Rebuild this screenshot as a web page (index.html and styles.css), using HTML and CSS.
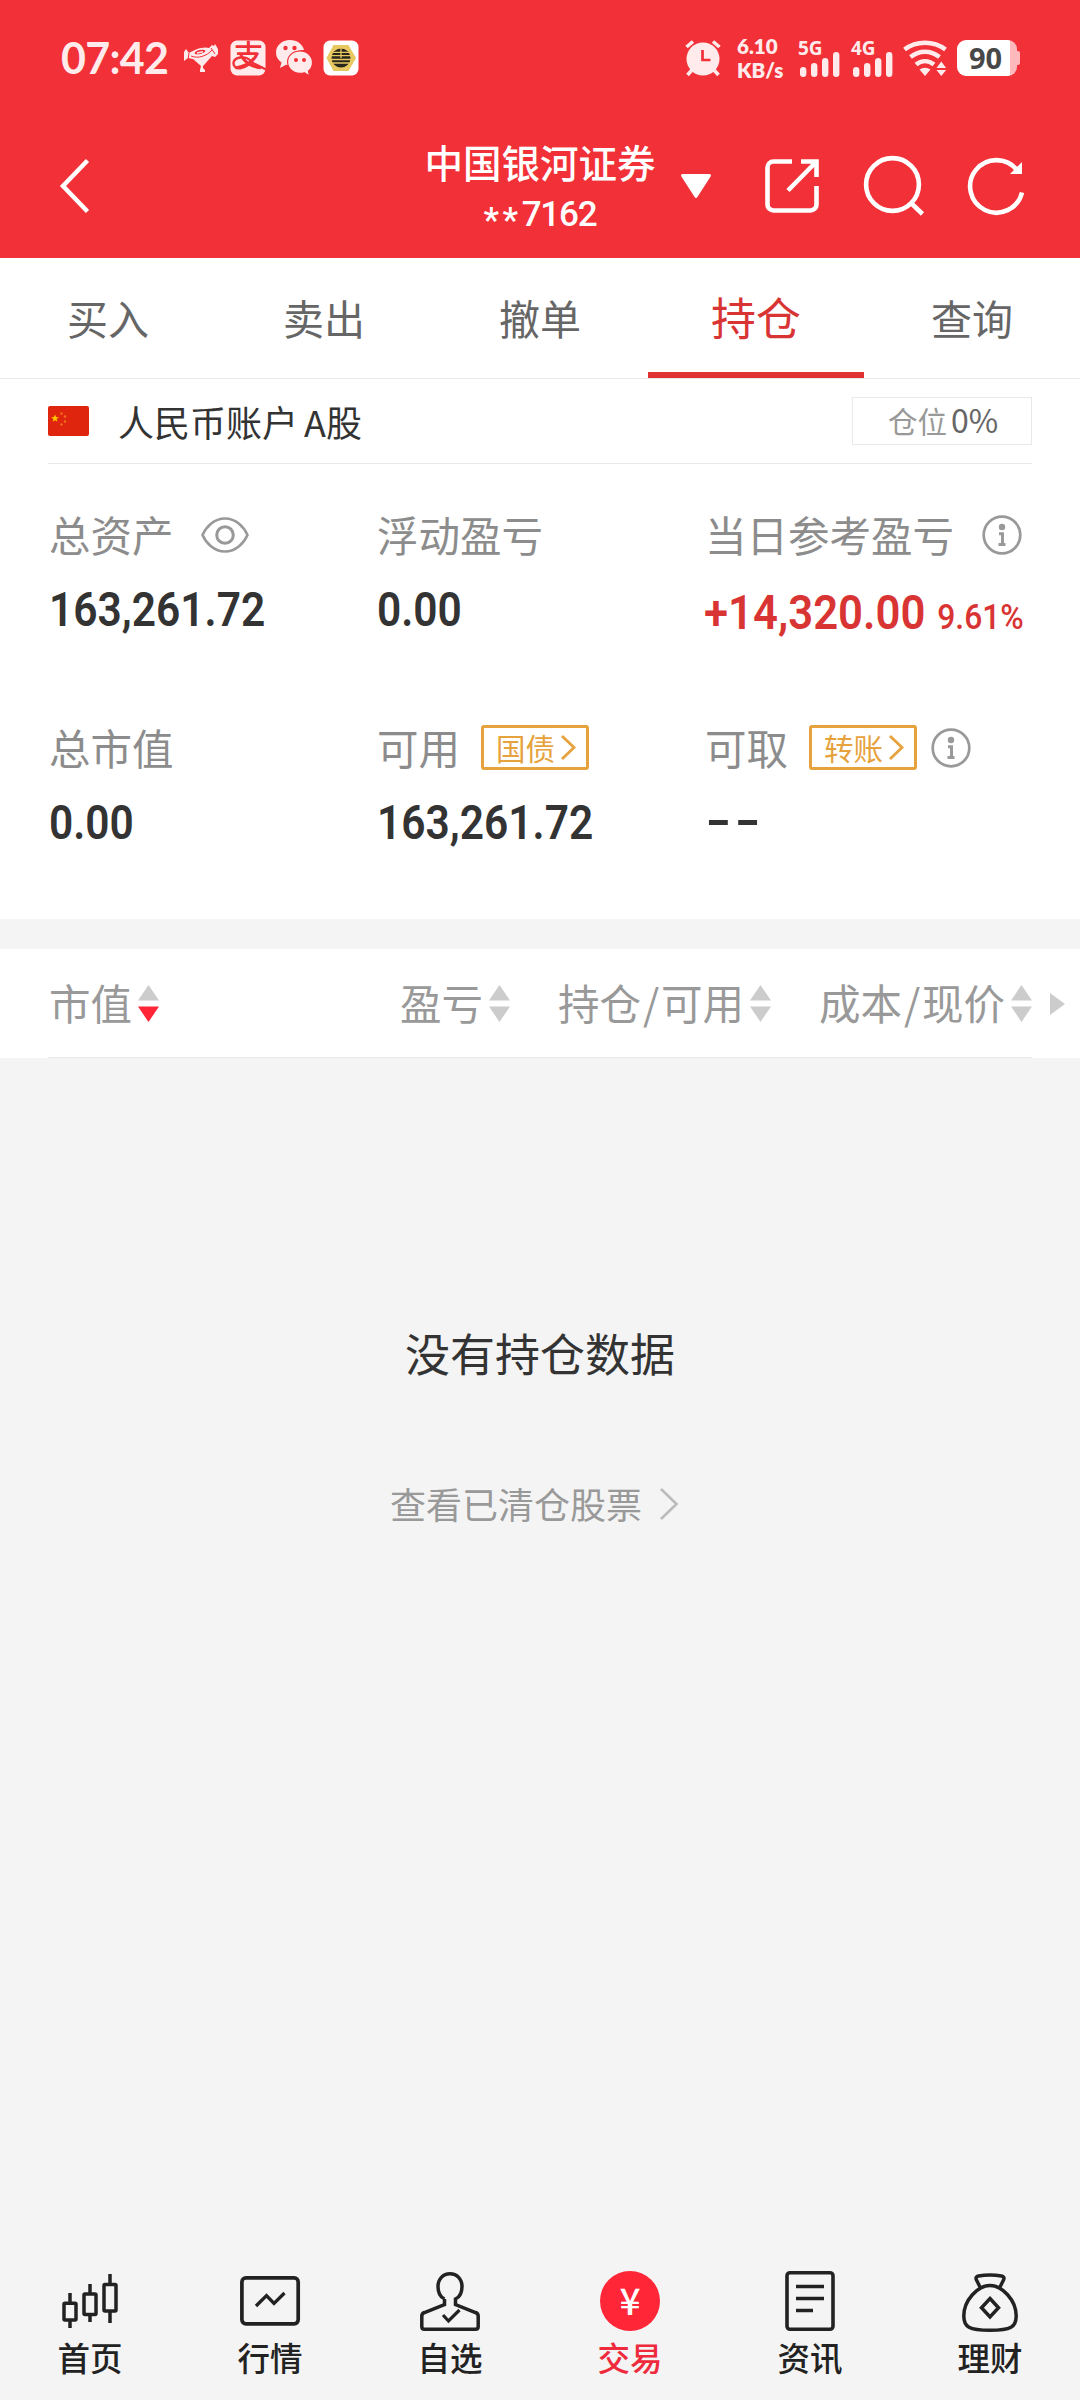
FILE: index.html
```html
<!DOCTYPE html>
<html lang="zh-CN">
<head>
<meta charset="utf-8">
<title>持仓</title>
<link rel="stylesheet" href="styles.css">
</head>
<body>
<div class="app">
  <header class="top">
    <div class="status">
      <span class="clock">07:42</span>
      <div class="notices">
        <svg width="36" height="36" viewBox="0 0 36 36"><path fill="#ffebec" d="M1 12l2-3 3 4c5-3 14-7 20-5l3-3 2 1 1-2 3 5v5l-3 3-3-1-8 9-1 1v2l2 2v2h-5v-2l1-4-8-7-5-1-4 3v-4z"/><path fill="none" stroke="#f23037" stroke-width="1" d="M8 16c7 3 16 0 21-6M28 8l4 6M6 13l-1 7"/><ellipse cx="17" cy="12" rx="5.500" ry="2" fill="#f23037" transform="rotate(-12 17 12)"/><path stroke="#ffebec" stroke-width="1.500" d="M14 13l6-1.200"/></svg>
        <svg width="36" height="36" viewBox="0 0 36 36"><rect x=".5" y=".5" width="35" height="35" rx="6.500" fill="#ffebec"/><text class="pay" x="18.500" y="26" text-anchor="middle">支</text><path d="M21 21C15 15 4 17 3.500 23c-.5 8 14 7 20-5M20 21.500l16 8" fill="none" stroke="#f23037" stroke-width="2.400"/></svg>
        <svg width="36" height="36" viewBox="0 0 36 36"><path fill="#ffebec" d="M14 0C6 0 0 5.500 0 12.500c0 4.500 2.200 7.700 5.500 10L4 28l6-3.200c2 .5 3 .5 5 .4C12 17 18 9.700 28 10 26.500 4 21 0 14 0z"/><path fill="#ffebec" stroke="#f23037" stroke-width="1.200" d="M24 11c-7 0-12.400 4.800-12.400 11S17 33.400 24 33.400c1.500 0 3-.2 4.200-.7L33.500 36l-1-5c2.500-2 4-5 4-8.600C36.500 16 31 11 24 11z"/><g fill="#f23037"><circle cx="9.500" cy="8" r="2.200"/><circle cx="18.500" cy="8" r="2.200"/><circle cx="20" cy="20" r="2"/><circle cx="28" cy="20" r="2"/></g></svg>
        <svg width="36" height="36" viewBox="0 0 36 36"><rect x=".5" y=".5" width="35" height="35" rx="6.500" fill="#fff"/><path fill="#e8c860" d="M10.500 5h15L33 18l-7.500 13h-15L3.500 18z"/><circle cx="18" cy="18" r="9.500" fill="#29261c"/><path stroke="#e8c860" stroke-width="1.300" d="M18 8v10M8 12.300h20M8 15.700h20M8 19.500h20M8 23h20"/></svg>
      </div>
      <div class="signals">
        <svg width="38" height="38" viewBox="0 0 38 38"><circle cx="19" cy="20" r="16.500" fill="#ffebec"/><path d="M2.500 8L9 2.500M35.500 8L29 2.500M8 31l-4.500 5M30 31l4.500 5" stroke="#ffebec" stroke-width="3.600"/><path d="M18.500 11v10h8" fill="none" stroke="#f23037" stroke-width="2.700"/></svg>
        <div class="speed"><span>6.10</span><span>KB/s</span></div>
        <div class="cell"><span>5G</span><svg width="40" height="26" viewBox="0 0 40 26"><path d="M3.200 19.200v3.600M14.200 15.200v7.600M25.200 10.200v12.600M36.200 4.200v18.600" stroke="#ffebec" stroke-width="6.400" stroke-linecap="round"/></svg></div>
        <div class="cell"><span>4G</span><svg width="40" height="26" viewBox="0 0 40 26"><path d="M3.200 19.200v3.600M14.200 15.200v7.600M25.200 10.200v12.600M36.200 4.200v18.600" stroke="#ffebec" stroke-width="6.400" stroke-linecap="round"/></svg></div>
        <svg class="wifi" width="44" height="38" viewBox="0 0 44 38"><g fill="none" stroke="#ffebec" stroke-width="4.500"><path d="M1.500 10.500c12-9 29-9 41 0M7.500 18c9-7 20-7 29 0M13 25.500c5.500-4.500 12.500-4.500 18 0"/></g><path fill="#ffebec" d="M16.500 30.500q5.500-3.500 11 0L22 37zM33.500 29l4.800-6.500 4.800 6.500zM33.500 31h9.600l-4.800 6z"/></svg>
        <div class="battery"><span>90</span></div>
      </div>
    </div>
    <div class="bar">
      <svg class="back" width="32" height="58" viewBox="0 0 32 58"><path d="M28.500 3.500L4 29l24.500 25.500" fill="none" stroke="#fff" stroke-width="4.500"/></svg>
      <div class="account">
        <span class="broker">中国银河证券</span>
        <span class="number"><i>**</i>7162</span>
      </div>
      <svg class="drop" width="30" height="24" viewBox="0 0 30 24"><path fill="#fff" stroke="#fff" stroke-width="3" stroke-linejoin="round" d="M1.500 1.500h27L15 22.500z"/></svg>
      <div class="tools">
        <svg width="54" height="54" viewBox="0 0 54 54"><path d="M27 2.500H8.500a6 6 0 0 0-6 6v37a6 6 0 0 0 6 6h37a6 6 0 0 0 6-6V27M36 2.500h15.500V18M51 3L23 31.500" fill="none" stroke="#fff" stroke-width="4.600"/></svg>
        <svg width="60" height="60" viewBox="0 0 60 60"><circle cx="28.500" cy="28.500" r="26.400" fill="none" stroke="#fff" stroke-width="4.600"/><path d="M47 47l11.500 11" stroke="#fff" stroke-width="4.600"/></svg>
        <svg width="58" height="60" viewBox="0 0 58 60"><path d="M54 36.500A26.300 26.300 0 1 1 49 14" fill="none" stroke="#fff" stroke-width="4.600"/><path fill="#fff" d="M54 6v12H42z"/></svg>
      </div>
    </div>
  </header>

  <nav class="tabs">
    <span class="tab">买入</span><span class="tab">卖出</span><span class="tab">撤单</span><span class="tab active">持仓</span><span class="tab">查询</span>
  </nav>

  <section class="summary">
    <div class="market">
      <svg width="41" height="30" viewBox="0 0 41 30"><rect width="41" height="30" rx="2" fill="#e0250f"/><path fill="#ffc400" d="M7 8.500l1.100 2.600 2.800.2-2.200 1.800.7 2.700L7 14.300l-2.400 1.500.7-2.700-2.200-1.800 2.800-.2z"/><g fill="#f0701c"><circle cx="13.500" cy="7.500" r="1.200"/><circle cx="17" cy="10.500" r="1.200"/><circle cx="17" cy="15.500" r="1.200"/><circle cx="13.500" cy="18.500" r="1.200"/></g></svg>
      <span class="market-name">人民币账户<i></i>A股</span>
      <div class="ratio">仓位<b>0%</b></div>
    </div>
    <div class="figures">
      <div class="figure">
        <div class="label">总资产<svg class="eye" width="48" height="36" viewBox="0 0 48 36"><path d="M1.500 18C5 10 13 1.500 24 1.500S43 10 46.500 18C43 26 35 34.500 24 34.500S5 26 1.500 18z" fill="none" stroke="#999" stroke-width="2.600"/><circle cx="24" cy="18" r="8.300" fill="none" stroke="#999" stroke-width="3"/></svg></div>
        <div class="value"><span>163,261.72</span></div>
      </div>
      <div class="figure">
        <div class="label">浮动盈亏</div>
        <div class="value"><span>0.00</span></div>
      </div>
      <div class="figure">
        <div class="label">当日参考盈亏<svg class="info far" width="40" height="40" viewBox="0 0 40 40"><circle cx="20" cy="20" r="18.300" fill="none" stroke="#999" stroke-width="2.700"/><circle cx="20" cy="12" r="3.200" fill="#999"/><path d="M17 18.800h3.500v10.500M16.500 29.500h7" fill="none" stroke="#999" stroke-width="3"/></svg></div>
        <div class="value gain"><span>+14,320.00<small>9.61%</small></span></div>
      </div>
      <div class="figure">
        <div class="label">总市值</div>
        <div class="value"><span>0.00</span></div>
      </div>
      <div class="figure">
        <div class="label">可用<span class="tag">国债<svg width="17" height="27" viewBox="0 0 17 27"><path d="M2 2l12 11.500L2 25" fill="none" stroke="#e6a23c" stroke-width="2.800"/></svg></span></div>
        <div class="value"><span>163,261.72</span></div>
      </div>
      <div class="figure">
        <div class="label">可取<span class="tag">转账<svg width="17" height="27" viewBox="0 0 17 27"><path d="M2 2l12 11.500L2 25" fill="none" stroke="#e6a23c" stroke-width="2.800"/></svg></span><svg class="info near" width="40" height="40" viewBox="0 0 40 40"><circle cx="20" cy="20" r="18.300" fill="none" stroke="#999" stroke-width="2.700"/><circle cx="20" cy="12" r="3.200" fill="#999"/><path d="M17 18.800h3.500v10.500M16.500 29.500h7" fill="none" stroke="#999" stroke-width="3"/></svg></div>
        <div class="value dashes"><span>--</span></div>
      </div>
    </div>
  </section>

  <section class="columns">
    <div class="col first"><span>市值</span><svg width="21" height="37" viewBox="0 0 21 37"><path fill="#ccc" d="M10.500 0L21 15.500H0z"/><path fill="#fe2637" d="M10.500 37L21 21.500H0z"/></svg></div>
    <div class="col"><span>盈亏</span><svg width="21" height="37" viewBox="0 0 21 37"><path fill="#ccc" d="M10.500 0L21 15.500H0zM10.500 37L21 21.500H0z"/></svg></div>
    <div class="col"><span>持仓<em>/</em>可用</span><svg width="21" height="37" viewBox="0 0 21 37"><path fill="#ccc" d="M10.500 0L21 15.500H0zM10.500 37L21 21.500H0z"/></svg></div>
    <div class="col"><span>成本<em>/</em>现价</span><svg width="21" height="37" viewBox="0 0 21 37"><path fill="#ccc" d="M10.500 0L21 15.500H0zM10.500 37L21 21.500H0z"/></svg></div>
    <svg class="more" width="15" height="22" viewBox="0 0 15 22"><path fill="#ccc" d="M0 0l15 11L0 22z"/></svg>
  </section>

  <main class="empty">
    <p class="none">没有持仓数据</p>
    <p class="cleared">查看已清仓股票<svg width="20" height="34" viewBox="0 0 20 34"><path d="M2 2l15.500 15L2 32" fill="none" stroke="#bbb" stroke-width="2.600"/></svg></p>
  </main>

  <footer class="dock">
    <div class="item"><svg width="60" height="64" viewBox="0 0 60 64"><g fill="none" stroke="#222" stroke-width="3.500"><rect x="4" y="33.300" width="12" height="16.700" rx="1"/><path d="M10 23v9M10 50v8"/><rect x="24" y="24" width="12" height="20.500" rx="1"/><path d="M30 14v9M30 45v7"/><rect x="44" y="14.500" width="12" height="26.500" rx="1"/><path d="M50 4v9M50 42v11"/></g></svg><span>首页</span></div>
    <div class="item"><svg width="60" height="64" viewBox="0 0 60 64"><g fill="none" stroke="#222" stroke-width="3.700"><rect x="1.900" y="7.900" width="56.300" height="45.900" rx="4"/><path d="M16 36l10.500-10.500 7.500 8L44.500 23" stroke-width="3.300"/></g></svg><span>行情</span></div>
    <div class="item"><svg width="60" height="64" viewBox="0 0 60 64"><g fill="none" stroke="#222" stroke-width="3.500"><path d="M24.500 29v5.500L4.500 42.500Q1.800 43.500 1.800 46v10.500Q1.800 59.300 4.500 59.300h51q2.700 0 2.700-2.800V46q0-2.500-2.700-3.500L35.500 34.500V29C40 27 42 23 42 16.500 42 9 37 3.800 30 3.800S18 9 18 16.500C18 23 20 27 24.500 29"/><path d="M23 45l5.500 6L39.500 40" stroke-width="3.200"/></g></svg><span>自选</span></div>
    <div class="item on"><svg width="60" height="64" viewBox="0 0 60 64"><circle cx="30" cy="31" r="30" fill="#fe2637"/><text class="yen" x="30" y="44.500" text-anchor="middle">¥</text></svg><span>交易</span></div>
    <div class="item"><svg width="60" height="64" viewBox="0 0 60 64"><g fill="none" stroke="#222" stroke-width="3.600"><rect x="7" y="2.700" width="46" height="56.600" rx="3"/><path d="M16 16.500h28M16 28.500h28M16 40.500h17"/></g></svg><span>资讯</span></div>
    <div class="item"><svg width="60" height="64" viewBox="0 0 60 64"><g fill="none" stroke="#222" stroke-width="3.500"><path d="M30 15.500C18 15.500 3.800 30 3.800 46 3.800 57 9 60.300 30 60.300S56.200 57 56.200 46C56.200 30 42 15.500 30 15.500zM20 17l-3.500-7c-1.200-2.500 0-3.500 2-4 7-1.300 16-1.300 23 0 2 .5 3.200 1.500 2 4L40 17M30 28.500l8.500 9.300L30 47l-8.500-9.200z"/></g></svg><span>理财</span></div>
  </footer>
</div>
</body>
</html>
```
FILE: styles.css
```css
* { box-sizing: border-box; }
body { margin: 0; }
svg { display: block; flex: none; overflow: visible; }
.app {
  width: 1080px;
  height: 2400px;
  display: flex;
  flex-direction: column;
  background: #f4f4f4;
  color: #333;
  font-family: "Noto Sans CJK SC", sans-serif;
  white-space: nowrap;
}

/* header */
.top { height: 258px; background: #f23037; color: #fff; }
.status {
  height: 116px;
  padding: 0 60px 0 61px;
  display: flex;
  align-items: center;
  color: #ffebec;
}
.clock { font: 700 43px/50px Lato, sans-serif; width: 122px; letter-spacing: -.7px; }
.notices { display: flex; gap: 10.500px; }
.signals { margin-left: auto; display: flex; align-items: center; }
.speed {
  width: 45px;
  margin: 0 18px 0 15px;
  display: flex;
  flex-direction: column;
  font: 800 20.500px/24px Lato, sans-serif;
}
.cell {
  width: 40px;
  height: 38px;
  margin-right: 13px;
  display: grid;
}
.cell > * { grid-area: 1 / 1; }
.cell span { font: 700 19px/19px "Noto Sans", sans-serif; margin: 0 0 0 -2px; }
.cell svg { align-self: end; }
.wifi { margin: 0 10px 0 -3px; }
.battery {
  width: 60px;
  height: 36px;
  margin-right: 3px;
  border-radius: 9px;
  background: linear-gradient(90deg, #fff 53px, #ffb9bd 53px);
  color: #484848;
  font: 700 29px/36px "Noto Sans", sans-serif;
  padding-left: 12px;
  display: flex;
  position: relative;
}
.battery::after {
  content: "";
  position: absolute;
  right: -3px;
  top: 11px;
  width: 3px;
  height: 14px;
  border-radius: 0 2px 2px 0;
  background: #ffb9bd;
}
.pay { font: 500 30px/30px "Noto Sans CJK SC", sans-serif; fill: #f23037; }
.bar {
  height: 142px;
  display: grid;
  grid-template-columns: 425px 230px 110px 1fr;
  align-items: center;
  padding-bottom: 2px;
}
.back { margin-left: 59px; }
.account { display: flex; flex-direction: column; align-items: center; padding-top: 8px; }
.broker { font-size: 38.500px; font-weight: 500; line-height: 49px; }
.number { font: 500 35px/45px Roboto, sans-serif; letter-spacing: -1.200px; margin-top: 6px; display: flex; }
.number i { font-style: normal; letter-spacing: 3.500px; padding-top: 6px; }
.drop { margin-left: 26px; }
.tools { display: flex; align-items: center; gap: 44.500px; }

/* tabs */
.tabs {
  height: 121px;
  background: #fff;
  border-bottom: 1px solid #e9e9e9;
  display: grid;
  grid-template-columns: repeat(5, 1fr);
}
.tab {
  font-size: 41px;
  line-height: 118px;
  color: #666;
  text-align: center;
  height: 120px;
}
.tab.active { font-size: 45px; color: #d93434; border-bottom: 6px solid #e03133; }

/* account summary */
.summary { height: 540px; background: #fff; padding: 0 48px; }
.market {
  height: 85px;
  border-bottom: 1px solid #e9e9e9;
  display: flex;
  align-items: center;
}
.market-name { margin-left: 29px; font-size: 36px; line-height: 50px; }
.market-name i { display: inline-block; width: 6px; }
.ratio {
  margin-left: auto;
  width: 180px;
  height: 48px;
  border: 1px solid #e9e9e9;
  display: flex;
  justify-content: center;
  padding-left: 2px;
  font-size: 29.500px;
  line-height: 44px;
  color: #999;
}
.ratio b { font-weight: 400; font-size: 32px; line-height: 43px; color: #666; margin-left: 4px; }
.figures {
  display: grid;
  grid-template-columns: repeat(3, 328px);
  grid-template-rows: 213px 213px;
  padding-top: 41px;
}
.label {
  height: 58px;
  display: flex;
  align-items: center;
  padding-left: 1px;
  font-size: 41.500px;
  line-height: 58px;
  color: #8c8c8c;
}
.eye { margin: 2px 0 0 27px; }
.info.far { margin: 1px 0 0 28px; }
.info.near { margin: 1px 0 0 14px; }
.tag {
  width: 108px;
  height: 45px;
  margin-left: 21px;
  border: 3px solid #e6a23c;
  border-radius: 3px;
  display: flex;
  align-items: center;
  padding-left: 12px;
  gap: 5px;
  font-size: 29.500px;
  line-height: 36px;
  color: #e6a23c;
}
.value {
  font: 600 48px/60px Roboto, sans-serif;
  margin-top: 17px;
  height: 60px;
}
.value span {
  display: inline-block;
  margin-left: 1px;
  transform: scaleX(.885);
  transform-origin: 0 50%;
}
.value.gain { color: #d93434; line-height: 66px; }
.value.gain span { margin-left: 0; transform: scaleX(.91); }
.value small { font-size: 35px; font-weight: 500; margin-left: 13px; }
.value.dashes { font-family: Inter, sans-serif; line-height: 54px; letter-spacing: 2px; }
.value.dashes span { transform: scaleX(1.2); }

/* holdings table head */
.columns {
  height: 109px;
  margin-top: 30px;
  padding-left: 49px;
  background: linear-gradient(#e9e9e9, #e9e9e9) 48px 100% / 984px 1px no-repeat #fff;
  display: flex;
  align-items: center;
  font-size: 41.500px;
  line-height: 60px;
  color: #999;
}
.col { display: flex; align-items: center; margin-right: 48px; }
.col.first { margin-right: 241px; }
.col span { display: flex; padding-bottom: 3px; }
.col em { font-style: normal; width: 20px; text-align: center; }
.col svg { margin-left: 6px; }
.more { margin-left: -30px; }

/* empty state */
.empty { flex: 1; display: flex; flex-direction: column; align-items: center; }
.none { margin: 263px 0 0; font-size: 45px; line-height: 64px; }
.cleared {
  margin: 92px 11px 0 0;
  display: flex;
  align-items: center;
  gap: 17px;
  font-size: 36px;
  line-height: 52px;
  color: #999;
}
.cleared svg { margin-top: 2px; }

/* bottom navigation */
.dock { height: 130px; display: grid; grid-template-columns: repeat(6, 1fr); }
.item {
  display: flex;
  flex-direction: column;
  align-items: center;
  color: #222;
  font-size: 32.500px;
  font-weight: 500;
  line-height: 44px;
  gap: 1px;
}
.item.on { color: #ee2a3c; }
.yen { font: 500 37px/37px "Noto Sans CJK SC", sans-serif; fill: #fff; }
```
